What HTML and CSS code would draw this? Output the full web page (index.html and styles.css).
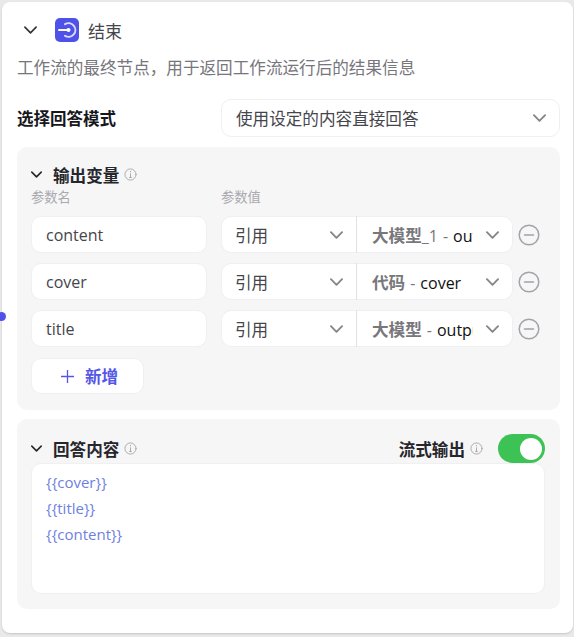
FILE: index.html
```html
<!DOCTYPE html>
<html lang="zh-CN">
<head>
    <meta charset="UTF-8">
    <meta name="viewport" content="width=device-width, initial-scale=1.0">
    <title>结束</title>
    <link rel="stylesheet" href="styles.css">
</head>
<body>
    <span class="handle"></span>
    <div class="card">
        <div class="card-head">
            <svg class="chevron-head" viewBox="0 0 14 8"><path d="M1 1l6 6 6-6"/></svg>
            <span class="node-icon">
                <svg viewBox="0 0 24 24"><path d="M4 12h9.5"/><circle cx="13.5" cy="12" r="2" fill="#fff" stroke="none"/><path class="node-ring" d="M10 6.2a6.8 6.8 0 1 1 0 11.6"/></svg>
            </span>
            <span class="node-title">结束</span>
        </div>
        <p class="node-desc">工作流的最终节点，用于返回工作流运行后的结果信息</p>

        <div class="mode-row">
            <label class="mode-label">选择回答模式</label>
            <div class="select mode-select">
                <span class="select-text">使用设定的内容直接回答</span>
                <svg class="chevron" viewBox="0 0 14 8"><path d="M1 1l6 6 6-6"/></svg>
            </div>
        </div>

        <section class="panel panel-vars">
            <div class="panel-head">
                <svg class="chevron-small" viewBox="0 0 14 8"><path d="M1 1l6 6 6-6"/></svg>
                <span class="panel-title">输出变量</span>
                <svg class="info" viewBox="0 0 14 14"><circle cx="7" cy="7" r="6"/><path d="M7 6.2v4M6 10.2h2"/><circle cx="7" cy="4" r=".7" class="info-dot"/></svg>
            </div>
            <div class="col-labels">
                <span class="col-name">参数名</span>
                <span>参数值</span>
            </div>

            <div class="var-row">
                <div class="field">content</div>
                <div class="select ref-type">
                    <span class="select-text">引用</span>
                    <svg class="chevron" viewBox="0 0 14 8"><path d="M1 1l6 6 6-6"/></svg>
                </div>
                <div class="select ref-value">
                    <span class="ref-text"><b>大模型</b><em>_1<i class="dash">-</i></em>output</span>
                    <svg class="chevron" viewBox="0 0 14 8"><path d="M1 1l6 6 6-6"/></svg>
                </div>
                <svg class="remove" viewBox="0 0 22 22"><circle cx="11" cy="11" r="9.8"/><path d="M6.5 11h9"/></svg>
            </div>
            <div class="var-row">
                <div class="field">cover</div>
                <div class="select ref-type">
                    <span class="select-text">引用</span>
                    <svg class="chevron" viewBox="0 0 14 8"><path d="M1 1l6 6 6-6"/></svg>
                </div>
                <div class="select ref-value">
                    <span class="ref-text"><b>代码</b><em><i class="dash">-</i></em>cover</span>
                    <svg class="chevron" viewBox="0 0 14 8"><path d="M1 1l6 6 6-6"/></svg>
                </div>
                <svg class="remove" viewBox="0 0 22 22"><circle cx="11" cy="11" r="9.8"/><path d="M6.5 11h9"/></svg>
            </div>
            <div class="var-row">
                <div class="field">title</div>
                <div class="select ref-type">
                    <span class="select-text">引用</span>
                    <svg class="chevron" viewBox="0 0 14 8"><path d="M1 1l6 6 6-6"/></svg>
                </div>
                <div class="select ref-value">
                    <span class="ref-text"><b>大模型</b><em><i class="dash">-</i></em>output</span>
                    <svg class="chevron" viewBox="0 0 14 8"><path d="M1 1l6 6 6-6"/></svg>
                </div>
                <svg class="remove" viewBox="0 0 22 22"><circle cx="11" cy="11" r="9.8"/><path d="M6.5 11h9"/></svg>
            </div>

            <button class="add-btn">
                <svg viewBox="0 0 14 14"><path d="M7 0v14M0 7h14"/></svg>
                <span>新增</span>
            </button>
        </section>

        <section class="panel panel-answer">
            <div class="answer-head">
                <svg class="chevron-small" viewBox="0 0 14 8"><path d="M1 1l6 6 6-6"/></svg>
                <span class="panel-title">回答内容</span>
                <svg class="info" viewBox="0 0 14 14"><circle cx="7" cy="7" r="6"/><path d="M7 6.2v4M6 10.2h2"/><circle cx="7" cy="4" r=".7" class="info-dot"/></svg>
                <span class="stream-label">流式输出</span>
                <svg class="info" viewBox="0 0 14 14"><circle cx="7" cy="7" r="6"/><path d="M7 6.2v4M6 10.2h2"/><circle cx="7" cy="4" r=".7" class="info-dot"/></svg>
                <span class="toggle"><span class="toggle-knob"></span></span>
            </div>
            <div class="answer-box">
                <div>{{cover}}</div>
                <div>{{title}}</div>
                <div>{{content}}</div>
            </div>
        </section>
    </div>
</body>
</html>
```

FILE: styles.css
```css
* {
    box-sizing: border-box;
}

body {
    margin: 0;
    height: 637px;
    overflow: hidden;
    padding: 2px 0 0 2px;
    background: #e9e9e9;
    color: #3c3c43;
    font-family: "Open Sans", "Noto Sans CJK SC", sans-serif;
    font-size: 16px;
}

.handle {
    position: absolute;
    left: -3px;
    top: 312px;
    width: 9px;
    height: 9px;
    border-radius: 50%;
    background: #4f52e8;
}

.card {
    width: 571px;
    height: 631px;
    padding: 15px 13px 0 15px;
    background: #fff;
    border-radius: 8px;
    box-shadow: 0 1px 2px rgba(0, 0, 0, 0.15);
}

svg {
    fill: none;
    stroke-linecap: round;
    stroke-linejoin: round;
}

.card-head {
    display: flex;
    align-items: center;
    height: 26px;
    padding-left: 7px;
}

.chevron-head {
    width: 13px;
    height: 8px;
    stroke: #33333a;
    stroke-width: 1.8;
}

.node-icon {
    display: flex;
    align-items: center;
    justify-content: center;
    width: 24px;
    height: 24px;
    margin-left: 18px;
    background: #4f52e8;
    border-radius: 5px;
}

.node-icon svg {
    width: 24px;
    height: 24px;
    stroke: #fff;
    stroke-width: 2;
}

.node-ring {
    stroke: #d9daf9;
}

.node-title {
    margin-left: 9px;
    font-size: 17px;
    color: #45454c;
}

.node-desc {
    margin: 13px 0 0;
    font-size: 16.6px;
    line-height: 24px;
    color: #76767c;
}

.mode-row {
    display: flex;
    align-items: center;
    margin-top: 19px;
}

.mode-label {
    width: 204px;
    font-size: 16.5px;
    font-weight: 700;
    color: #17171c;
}

.select {
    display: flex;
    align-items: center;
    justify-content: space-between;
    height: 38px;
    background: #fff;
    border: 1px solid #f0f0f2;
    border-radius: 10px;
    padding: 0 13px 0 14px;
}

.mode-select {
    width: 339px;
}

.select-text {
    font-size: 16.6px;
    color: #45454c;
}

.chevron {
    flex: none;
    width: 13px;
    height: 8px;
    stroke: #85858a;
    stroke-width: 2;
}

.panel {
    width: 543px;
    background: #f6f6f7;
    border-radius: 10px;
}

.panel-vars {
    height: 263px;
    margin-top: 10px;
    padding: 15px 14px 0;
}

.panel-answer {
    height: 190px;
    margin-top: 9px;
    padding: 17px 14px 0;
}

.panel-head,
.answer-head {
    display: flex;
    align-items: center;
    height: 25px;
}

.chevron-small {
    width: 11px;
    height: 7px;
    margin-right: 11px;
    stroke: #26262c;
    stroke-width: 2;
}

.panel-title,
.stream-label {
    font-size: 16.6px;
    font-weight: 700;
    color: #26262c;
}

.info {
    width: 13px;
    height: 13px;
    margin-left: 5px;
    stroke: #a6a6ab;
    stroke-width: 1;
}

.info-dot {
    fill: #a6a6ab;
    stroke: none;
}

.col-labels {
    display: flex;
    height: 20px;
    margin-bottom: 9px;
    font-size: 13.3px;
    line-height: 20px;
    color: #a9a9ae;
}

.col-name {
    width: 190px;
}

.var-row {
    display: flex;
    align-items: center;
    height: 37px;
    margin-bottom: 10px;
}

.field {
    width: 176px;
    height: 37px;
    margin-right: 14px;
    padding-left: 14px;
    line-height: 36px;
    color: #45454c;
    background: #fff;
    border: 1px solid #f0f0f2;
    border-radius: 10px;
}

.ref-type {
    width: 135px;
    height: 37px;
    padding-left: 13px;
    border-radius: 10px 0 0 10px;
    border-right: 0;
    box-shadow: 1px 0 0 #e2e2e4;
}

.ref-value {
    width: 156px;
    height: 37px;
    margin-left: 1px;
    border-radius: 0 10px 10px 0;
    border-left: 0;
    padding-left: 15px;
}

.ref-text {
    width: 101px;
    overflow: hidden;
    white-space: nowrap;
    color: #111;
}

.ref-text b {
    font-size: 16.6px;
    font-weight: 700;
    color: #77777c;
}

.ref-text em {
    font-style: normal;
    color: #77777c;
}

.dash {
    margin: 0 5px;
    font-style: normal;
}

.remove {
    width: 22px;
    height: 22px;
    margin-left: 5px;
    stroke: #a3a3a8;
    stroke-width: 1.5;
}

.add-btn {
    display: flex;
    align-items: center;
    width: 113px;
    height: 36px;
    margin-top: 11px;
    padding: 0 0 0 29px;
    background: #fff;
    border: 1px solid #f0f0f2;
    border-radius: 10px;
    font: inherit;
    font-size: 16.6px;
    font-weight: 700;
    color: #5457e6;
}

.add-btn svg {
    width: 13px;
    height: 13px;
    margin-right: 11px;
    stroke: #5457e6;
    stroke-width: 1.4;
}

.stream-label {
    margin-left: auto;
}

.toggle {
    display: flex;
    align-items: center;
    justify-content: flex-end;
    width: 47px;
    height: 29px;
    margin-left: 15px;
    margin-right: 1px;
    padding-right: 3px;
    background: #3dc255;
    border-radius: 15px;
}

.toggle-knob {
    width: 22px;
    height: 22px;
    background: #fff;
    border-radius: 50%;
}

.answer-head {
    margin-bottom: 2px;
}

.answer-box {
    width: 514px;
    height: 131px;
    padding: 5px 14px;
    background: #fff;
    border: 1px solid #f0f0f2;
    border-radius: 10px;
    font-size: 15px;
    line-height: 26px;
    color: #6f7fe0;
}
```
